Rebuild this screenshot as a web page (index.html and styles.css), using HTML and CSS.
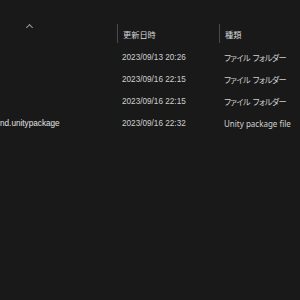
FILE: index.html
```html
<!DOCTYPE html>
<html lang="ja">
<head>
    <meta charset="UTF-8">
    <title>Explorer</title>
    <link rel="stylesheet" href="styles.css">
</head>
<body>
    <div class="list">
        <div class="row header">
            <div class="cell name-head"><span class="caret"></span></div>
            <div class="cell col-head">更新日時</div>
            <div class="cell col-head">種類</div>
        </div>
        <div class="row">
            <div class="cell name"></div>
            <div class="cell">2023/09/13 20:26</div>
            <div class="cell jp">ファイル フォルダー</div>
        </div>
        <div class="row">
            <div class="cell name"></div>
            <div class="cell">2023/09/16 22:15</div>
            <div class="cell jp">ファイル フォルダー</div>
        </div>
        <div class="row">
            <div class="cell name"></div>
            <div class="cell">2023/09/16 22:15</div>
            <div class="cell jp">ファイル フォルダー</div>
        </div>
        <div class="row">
            <div class="cell name">nd.unitypackage</div>
            <div class="cell">2023/09/16 22:32</div>
            <div class="cell type">Unity package file</div>
        </div>
    </div>
</body>
</html>
```

FILE: styles.css
```css
body{
    margin: 0;
    background-color: #191919;
    height: 300px;
    overflow: hidden;
    font-family: "Liberation Sans", "Noto Sans CJK JP", sans-serif;
    font-size: 8.2px;
    color: #cfcfcf;
}
.list{
    padding-top: 22px;
}
.row{
    display: grid;
    grid-template-columns: 117px 102px 1fr;
    height: 22px;
    align-items: center;
}
.row.header{
    height: 24px;
    align-items: start;
}
.cell{
    padding-left: 5px;
    white-space: nowrap;
    color: #cfcfcf;
}
.col-head{
    height: 19px;
    margin-top: 2px;
    border-left: 1px solid #4a4a4a;
    padding-left: 5px;
    display: flex;
    align-items: center;
    color: #d6d6d6;
}
.name-head{
    padding-left: 27px;
    padding-top: 3px;
}
.caret{
    display: block;
    width: 4px;
    height: 4px;
    border-left: 1px solid #9a9a9a;
    border-top: 1px solid #9a9a9a;
    transform: rotate(45deg);
}
.name{
    padding-left: 0;
    color: #e2e2e2;
}
.type{
    font-family: "Noto Sans", sans-serif;
    font-size: 8px;
    color: #d2d2d2;
}
.jp{
    font-feature-settings: "palt";
    letter-spacing: -0.6px;
    word-spacing: 1px;
}
```
